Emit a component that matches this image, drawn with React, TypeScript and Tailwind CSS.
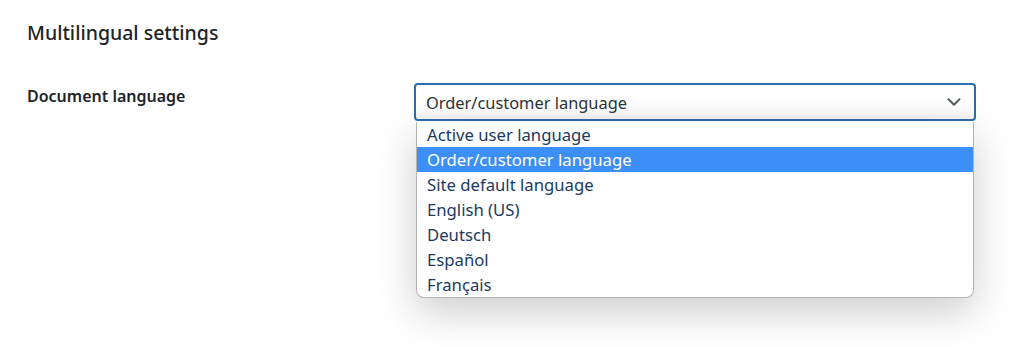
import { ChevronDown } from "lucide-react";

const OPTIONS = [
  "Active user language",
  "Order/customer language",
  "Site default language",
  "English (US)",
  "Deutsch",
  "Español",
  "Français",
];

const SELECTED = "Order/customer language";

export default function App() {
  return (
    <div
      className="h-[347px] w-[1011px] overflow-hidden bg-white pl-[27px] pt-[19px] text-[#1d2327]"
      style={{ fontFamily: '"Noto Sans", "Open Sans", sans-serif' }}
    >
      <h2 className="text-[19.5px] font-medium leading-[28px]">Multilingual settings</h2>

      <div className="mt-[36px] flex">
        <div className="w-[387px] pt-[1px] text-[16px] font-semibold leading-[24px]">Document language</div>

        <div className="relative w-[562px]">
          {/* select box */}
          <div className="flex h-[38px] items-center justify-between rounded-[4px] border-2 border-[#2c6ead] bg-gradient-to-b from-white from-60% to-[#f3f3f3] pl-[10px] pr-[9px]">
            <span className="pt-[2px] text-[16.4px] leading-[24px] text-[#2c3338]">{SELECTED}</span>
            <ChevronDown className="h-[22px] w-[22px] text-[#50575e]" strokeWidth={2} />
          </div>

          {/* open list */}
          <div className="absolute left-[2px] right-[2px] top-[39px] overflow-hidden rounded-b-[8px] border border-t-0 border-[#b4b4b4] bg-white shadow-[0_14px_40px_rgba(0,0,0,0.2)]">
            {OPTIONS.map(o => (
              <div
                key={o}
                className={`h-[25px] pl-[10px] text-[16.7px] leading-[26px] ${
                  o === SELECTED ? "bg-[#3d8ff8] text-white" : "text-[#1b3a63]"
                }`}
              >
                {o}
              </div>
            ))}
          </div>
        </div>
      </div>
    </div>
  );
}
